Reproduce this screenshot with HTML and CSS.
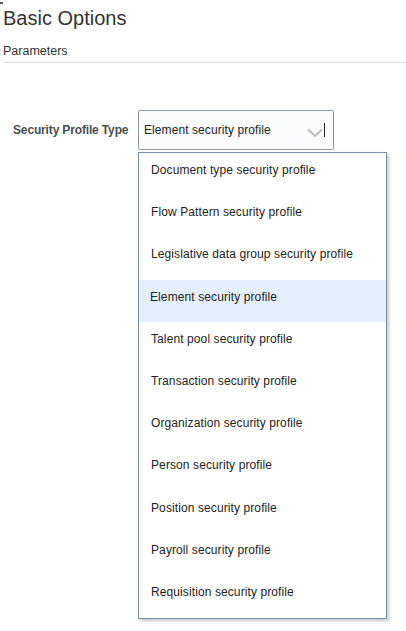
FILE: index.html
```html
<!DOCTYPE html>
<html>
<head>
<meta charset="utf-8">
<link rel="stylesheet" href="styles.css">
</head>
<body>
<div class="page">
  <span class="corner-mark"></span>
  <div class="header">
    <h1 class="title">Basic Options</h1>
    <div class="subtitle">Parameters</div>
  </div>
  <div class="form-row">
    <label class="field-label">Security Profile Type</label>
    <div class="select-wrap">
      <div class="select-box">
        <span class="select-value">Element security profile</span>
        <svg class="chevron" width="16" height="10" viewBox="0 0 16 10"><path d="M1 1.5 L8 8 L15 1.5" fill="none" stroke="#b9bcc0" stroke-width="2"/></svg>
        <span class="cursor"></span>
      </div>
      <ul class="dropdown">
        <li class="option">Document type security profile</li>
        <li class="option">Flow Pattern security profile</li>
        <li class="option">Legislative data group security profile</li>
        <li class="option selected">Element security profile</li>
        <li class="option">Talent pool security profile</li>
        <li class="option">Transaction security profile</li>
        <li class="option">Organization security profile</li>
        <li class="option">Person security profile</li>
        <li class="option">Position security profile</li>
        <li class="option">Payroll security profile</li>
        <li class="option">Requisition security profile</li>
      </ul>
    </div>
  </div>
</div>
</body>
</html>
```
FILE: styles.css
```css
html, body {
  margin: 0;
  padding: 0;
  background: #ffffff;
}
body {
  font-family: "Liberation Sans", Arial, sans-serif;
  color: #333333;
}
.page {
  position: relative;
  width: 406px;
  height: 631px;
  overflow: hidden;
}
.corner-mark {
  position: absolute;
  left: 0;
  top: 2px;
  width: 3px;
  height: 2px;
  background: #555;
}
.header {
  margin-left: 3px;
  padding-top: 6px;
  padding-bottom: 4px;
  border-bottom: 1px solid #d9e1e8;
}
.title {
  margin: 0;
  font-size: 20px;
  line-height: 24px;
  font-weight: normal;
  color: #333333;
}
.subtitle {
  margin-top: 14px;
  font-size: 12.5px;
  line-height: 14px;
  color: #333333;
}
.form-row {
  display: flex;
  align-items: center;
  margin-top: 47px;
  padding-left: 13px;
}
.field-label {
  flex: 0 0 125px;
  font-size: 12px;
  font-weight: bold;
  letter-spacing: -0.15px;
  color: #4d4d4d;
}
.select-wrap {
  position: relative;
}
.select-box {
  display: flex;
  align-items: center;
  box-sizing: border-box;
  width: 196px;
  height: 40px;
  padding-left: 5px;
  border: 1px solid #8e9ba8;
  border-radius: 2px;
  background: #fbfcfd;
}
.select-value {
  flex: 1;
  font-size: 12px;
  letter-spacing: 0.08px;
  color: #222222;
}
.chevron {
  margin-top: 6px;
}
.cursor {
  width: 1px;
  height: 14px;
  margin: 0 8px 1px 1px;
  background: #222;
}
.dropdown {
  position: absolute;
  top: 42px;
  left: 0;
  box-sizing: border-box;
  width: 249px;
  margin: 0;
  padding: 0 0 1px 0;
  list-style: none;
  background: #ffffff;
  border: 1px solid #7b90a6;
  box-shadow: 2px 2px 3px rgba(0, 0, 0, 0.22);
}
.option {
  height: 42.2px;
  box-sizing: border-box;
  padding: 10px 12px 0 12px;
  font-size: 12px;
  line-height: 15px;
  letter-spacing: 0.1px;
  color: #222222;
  white-space: nowrap;
}
.option.selected {
  background: #e3f0fc;
  padding-left: 11px;
}
```
